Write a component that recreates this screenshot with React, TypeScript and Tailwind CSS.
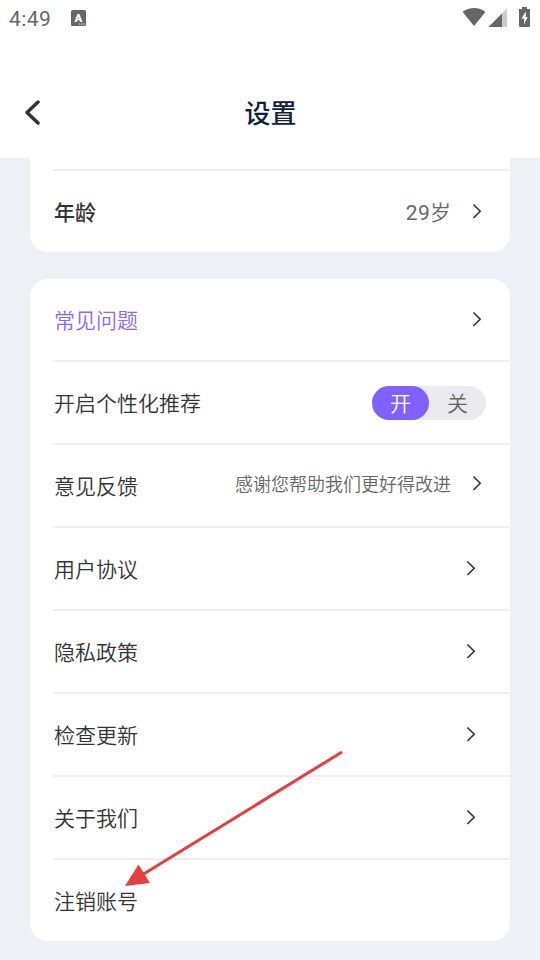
import clsx from 'clsx';

type Row = {
  label: string;
  value?: string;
  kind?: 'arrow' | 'toggle' | 'none';
  accent?: boolean;
  // link rows keep the arrow slightly further from the edge
  inset?: boolean;
};

const rows: Row[] = [
  { label: '常见问题', accent: true },
  { label: '开启个性化推荐', kind: 'toggle' },
  { label: '意见反馈', value: '感谢您帮助我们更好得改进' },
  { label: '用户协议', inset: true },
  { label: '隐私政策', inset: true },
  { label: '检查更新', inset: true },
  { label: '关于我们', inset: true },
  { label: '注销账号', kind: 'none' },
];

function Chevron() {
  return (
    <svg width="10" height="16" viewBox="0 0 10 16" fill="none" className="mb-px shrink-0">
      <path d="M1.4 1.500L8.2 8.200L1.4 15" stroke="#333" strokeWidth="1.6" />
    </svg>
  );
}

function StatusBar() {
  return (
    <div className="flex h-9 items-center justify-between pl-[9px] pr-[10px]">
      <div className="flex items-center">
        <span className="w-[62px] pt-[2px] font-[Roboto] text-[21px] font-normal leading-6 tracking-[0.4px] text-[#666]">4:49</span>
        <svg width="15" height="16" viewBox="0 0 15 16">
          <rect width="15" height="16" rx="1.5" fill="#666" />
          <text x="7.4" y="11.8" textAnchor="middle" fill="#fff" className="font-[Roboto] text-[11.5px] font-black">A</text>
          <path d="M8 14h1.2M10.3 14h1.2M12.6 14h1.2" stroke="#fff" strokeWidth="1.2" />
        </svg>
      </div>
      <div className="flex items-center pb-[2px]">
        <svg width="24" height="20" viewBox="0 0 24 20">
          <path d="M12 19L0.6 5C3.8 2.400 7.700 1 12 1s8.200 1.400 11.400 4z" fill="#666" />
        </svg>
        <svg width="19" height="20" viewBox="0 0 19 20" className="ml-[2px]">
          <path d="M0.5 20L19 1.500V20z" fill="#ccc" />
          <path d="M0.5 20L14 6.500V20z" fill="#666" />
        </svg>
        <svg width="11" height="20" viewBox="0 0 11 20" className="ml-[12px]">
          <path d="M3 0h5v2h3v16.5a1.5 1.5 0 0 1-1.5 1.5h-8A1.5 1.5 0 0 1 0 18.500V2h3z" fill="#666" />
          <path d="M6.800 4.500L2.500 11.500H5V17.500L8.700 10H6.800z" fill="#fff" />
        </svg>
      </div>
    </div>
  );
}

function Toggle() {
  return (
    <div className="flex h-[34px] w-[114px] rounded-full bg-[#ebeaef] text-[21px] leading-[32px]">
      <span className="w-[57px] rounded-full bg-[#7f61ff] text-center text-white">开</span>
      <span className="w-[57px] text-center text-[#666]">关</span>
    </div>
  );
}

function SettingRow({ row }: { row: Row }) {
  const { label, value, kind = 'arrow', accent, inset } = row;
  return (
    <div className="box-content flex h-[81px] items-center justify-between">
      <span className={clsx('pb-px pl-px text-[21px] leading-8', accent ? 'text-[#8468ff]' : 'text-[#333]')}>{label}</span>
      {kind === 'toggle' && (
        <div className="pr-6">
          <Toggle />
        </div>
      )}
      {kind === 'arrow' && (
        <div className={clsx('flex items-center', inset ? 'pr-[34px]' : 'pr-7', value && 'pb-1')}>
          {value && <span className="mb-px mr-[21px] text-[18px] leading-7 text-[#666]">{value}</span>}
          <Chevron />
        </div>
      )}
    </div>
  );
}

export default function App() {
  return (
    <div className="relative h-[960px] w-[540px] overflow-hidden bg-[#eff0f5] font-['Noto_Sans_CJK_SC',sans-serif] font-[350]">
      {/* Header */}
      <header className="h-[158px] bg-white">
        <StatusBar />
        <div className="-mt-px grid h-[153px] grid-cols-[80px_1fr_80px] items-center pl-6">
          <svg width="17" height="26" viewBox="0 0 17 26" fill="none">
            <path d="M14 3L3 13.500L14 24" stroke="#333" strokeWidth="3.500" strokeLinecap="round" strokeLinejoin="round" />
          </svg>
          <h1 className="-ml-6 pl-px pt-px text-center text-[26px] font-medium leading-9 text-[#132039]">设置</h1>
        </div>
      </header>

      {/* Profile card, scrolled under the header */}
      <section className="mx-[30px] h-[94px] rounded-b-[18px] bg-white pl-[23px]">
        <div className="h-[13px] border-b-2 border-[#efefef]" />
        <div className="flex h-[81px] items-center justify-between pl-px pr-7">
          <span className="pb-0.5 text-[21px] font-medium leading-8 text-[#333]">年龄</span>
          <div className="flex items-center">
            <span className="mr-[21px] text-[21px] leading-8 text-[#666]">
              <span className="font-[Roboto] font-normal tracking-[0.3px]">29</span>岁
            </span>
            <Chevron />
          </div>
        </div>
      </section>

      <section className="mx-[30px] mt-[27px] divide-y-2 divide-[#efefef] rounded-[18px] bg-white pl-[23px]">
        {rows.map(row => (
          <SettingRow key={row.label} row={row} />
        ))}
      </section>

      {/* Pointer to the account row */}
      <svg className="absolute left-[120px] top-[745px]" width="230" height="145" viewBox="0 0 230 145">
        <path d="M222 7L22 130" stroke="#e63e40" strokeWidth="3" />
        <path d="M5 141L18.500 119.500L30 138z" fill="#e63e40" />
      </svg>
    </div>
  );
}
